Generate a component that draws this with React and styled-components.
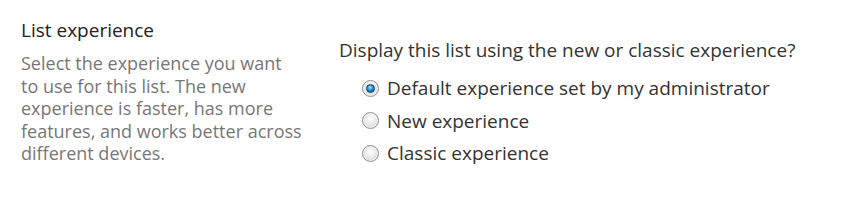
import React from 'react'
import styled, { createGlobalStyle } from 'styled-components'

const GlobalStyle = createGlobalStyle`
    body {
        margin: 0;
        background: #fff;
        font-family: "Open Sans", "Noto Sans", sans-serif;
    }
`

const Page = styled.div`
    display: flex;
    width: 858px;
    height: 212px;
    padding: 18px 0 0 21px;
    box-sizing: border-box;
`
const Side = styled.div`
    width: 286px;
    margin-right: 32px;
`
const Title = styled.h3`
    margin: 0 0 10px;
    font-size: 19px;
    font-weight: 400;
    line-height: 24px;
    color: #222;
`
const Description = styled.p`
    margin: 0;
    font-size: 18px;
    line-height: 22.6px;
    color: #777;
`
const Main = styled.div`
    padding-top: 20px;
`
const Question = styled.div`
    font-size: 19px;
    line-height: 24px;
    color: #333;
    margin-bottom: 14px;
`
const Options = styled.div`
    display: flex;
    flex-direction: column;
    gap: 8.5px;
    padding-left: 23px;
`
const Option = styled.label`
    display: flex;
    align-items: center;
    gap: 8px;
    font-size: 19px;
    line-height: 24px;
    color: #333;
`
const Radio = styled.span`
    position: relative;
    width: 17px;
    height: 17px;
    border-radius: 50%;
    border: 1px solid #8f8f8f;
    background: radial-gradient(circle at 50% 40%, #ffffff 0%, #f0f0f0 35%, #d4d4d4 80%, #c4c4c4 100%);
    box-shadow: inset 0 0 0 1px #f4f4f4;
    box-sizing: border-box;
    flex-shrink: 0;

    &::after {
        content: '';
        display: ${p => (p.checked ? 'block' : 'none')};
        position: absolute;
        left: 3px;
        top: 3px;
        width: 9px;
        height: 9px;
        border-radius: 50%;
        box-sizing: border-box;
        border: 1px solid #123f63;
        background: radial-gradient(circle at 45% 35%, #b4e8ff 0%, #2f97dc 40%, #0c4a80 100%);
    }
`

const options = [
    { label: 'Default experience set by my administrator', checked: true },
    { label: 'New experience' },
    { label: 'Classic experience' },
]

const App = () => {
    return (
        <>
            <GlobalStyle />
            <Page>
                <Side>
                    <Title>List experience</Title>
                    <Description>
                        Select the experience you want<br />
                        to use for this list. The new<br />
                        experience is faster, has more<br />
                        features, and works better across<br />
                        different devices.
                    </Description>
                </Side>
                <Main>
                    <Question>Display this list using the new or classic experience?</Question>
                    <Options>
                        {options.map(o => (
                            <Option key={o.label}>
                                <Radio checked={o.checked} />
                                {o.label}
                            </Option>
                        ))}
                    </Options>
                </Main>
            </Page>
        </>
    )
}

export default App
